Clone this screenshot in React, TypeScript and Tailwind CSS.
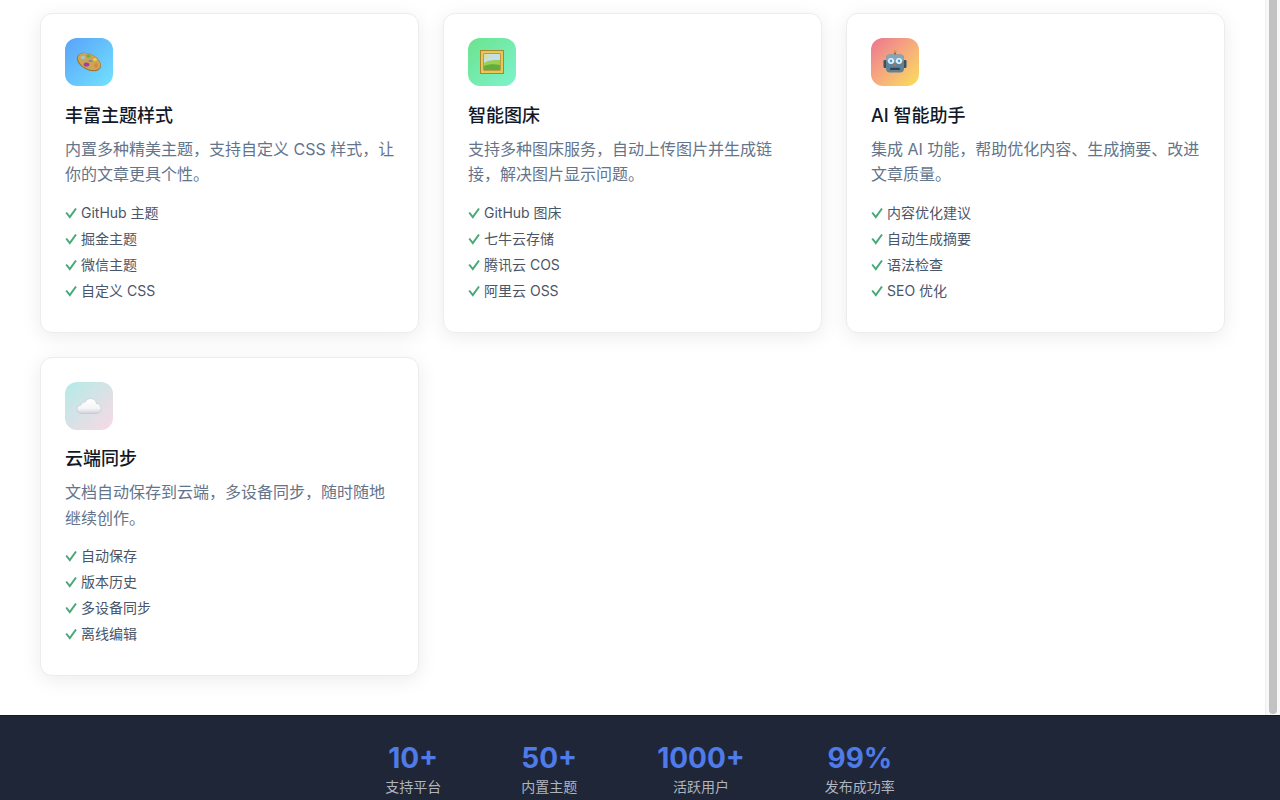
import React from 'react';

const features = [
  {
    title: '丰富主题样式',
    desc: '内置多种精美主题，支持自定义 CSS 样式，让你的文章更具个性。',
    items: ['GitHub 主题', '掘金主题', '微信主题', '自定义 CSS'],
    iconBg: 'bg-gradient-to-br from-[#5aa2f8] to-[#72e2ff]',
    icon: <PaletteIcon />,
  },
  {
    title: '智能图床',
    desc: '支持多种图床服务，自动上传图片并生成链接，解决图片显示问题。',
    items: ['GitHub 图床', '七牛云存储', '腾讯云 COS', '阿里云 OSS'],
    iconBg: 'bg-gradient-to-br from-[#6be38c] to-[#7ff3cd]',
    icon: <PictureIcon />,
  },
  {
    title: 'AI 智能助手',
    desc: '集成 AI 功能，帮助优化内容、生成摘要、改进文章质量。',
    items: ['内容优化建议', '自动生成摘要', '语法检查', 'SEO 优化'],
    iconBg: 'bg-gradient-to-br from-[#ec7390] to-[#fadf55]',
    icon: <RobotIcon />,
  },
  {
    title: '云端同步',
    desc: '文档自动保存到云端，多设备同步，随时随地继续创作。',
    items: ['自动保存', '版本历史', '多设备同步', '离线编辑'],
    iconBg: 'bg-gradient-to-br from-[#b0ebe8] to-[#f8d8e4]',
    icon: <CloudIcon />,
  },
];

const stats = [
  { value: '10+', label: '支持平台' },
  { value: '50+', label: '内置主题' },
  { value: '1000+', label: '活跃用户' },
  { value: '99%', label: '发布成功率' },
];

function PaletteIcon() {
  return (
    <svg width="28" height="24" viewBox="0 0 28 24">
      <ellipse cx="14" cy="12" rx="13" ry="8" transform="rotate(28 14 12)" fill="#9a7232" />
      <ellipse cx="14" cy="11.6" rx="12.2" ry="7.3" transform="rotate(28 14 12)" fill="#cda355" />
      <ellipse cx="8" cy="7.5" rx="2.2" ry="1.8" fill="#a8c4cc" />
      <ellipse cx="13.5" cy="6" rx="2" ry="1.5" fill="#5fb245" />
      <ellipse cx="20" cy="9.5" rx="1.8" ry="1.5" fill="#efd23e" />
      <ellipse cx="11.5" cy="14.5" rx="2.8" ry="2" fill="#9b3fae" />
      <ellipse cx="21" cy="15.5" rx="1.6" ry="2.2" fill="#dd8238" />
      <ellipse cx="15.5" cy="11" rx="2" ry="1.1" fill="#5b8fb5" />
    </svg>
  );
}

function PictureIcon() {
  return (
    <svg width="24" height="24" viewBox="0 0 24 24">
      <rect x="0" y="0" width="24" height="24" fill="#a9852b" />
      <rect x="1" y="1" width="22" height="22" fill="#e6c856" />
      <rect x="3.5" y="3.5" width="17" height="17" fill="#8d7030" />
      <rect x="4" y="4" width="16" height="16" fill="#c4dfe8" />
      <circle cx="6.5" cy="6.5" r="2" fill="#f4dc62" />
      <path d="M4 13c4-3 9-3 16-3v10H4z" fill="#9bd052" />
      <path d="M4 16c5-2 10-2 16-1v5H4z" fill="#62ad3c" />
    </svg>
  );
}

function RobotIcon() {
  return (
    <svg width="26" height="26" viewBox="0 0 26 26">
      <circle cx="13" cy="2.8" r="1.7" fill="#e8974a" />
      <rect x="12.2" y="3.5" width="1.6" height="2.5" fill="#8a5a3a" />
      <rect x="1.5" y="11" width="3.5" height="8" rx="1.2" fill="#3f525e" />
      <rect x="21" y="11" width="3.5" height="8" rx="1.2" fill="#3f525e" />
      <rect x="4" y="5.5" width="18" height="18" rx="4" fill="#5f8296" />
      <rect x="4" y="5.5" width="18" height="8" rx="4" fill="#86a6b8" />
      <circle cx="9" cy="12" r="3" fill="#e8f4fa" />
      <circle cx="17" cy="12" r="3" fill="#e8f4fa" />
      <circle cx="9" cy="12" r="1.4" fill="#4aa3d8" />
      <circle cx="17" cy="12" r="1.4" fill="#4aa3d8" />
      <rect x="12.2" y="14.5" width="1.6" height="2.4" fill="#c86a5a" />
      <rect x="8" y="18.8" width="10" height="2.2" rx="1" fill="#33444f" />
    </svg>
  );
}

function CloudIcon() {
  return (
    <svg width="26" height="18" viewBox="0 0 26 18">
      <defs>
        <linearGradient id="cloudFill" x1="0" y1="0" x2="0" y2="1">
          <stop offset="0" stopColor="#ffffff" />
          <stop offset="0.65" stopColor="#f6f6f8" />
          <stop offset="1" stopColor="#cfd2da" />
        </linearGradient>
      </defs>
      <path
        d="M6 16.5c-3 0-5-1.9-5-4.3 0-2.2 1.7-4 3.9-4.2C5.6 5.9 7.4 4.9 9.3 5.1 10.5 2.6 12.7 1.3 15.1 1.5c2.9.2 5 2.3 5.3 5 2.8.2 4.6 2.5 4.6 5 0 2.8-2.2 5-5.2 5z"
        fill="url(#cloudFill)"
        stroke="#b9bdc8"
        strokeWidth="0.5"
      />
    </svg>
  );
}

function FeatureCard({ title, desc, items, iconBg, icon }: (typeof features)[number]) {
  return (
    <div className="rounded-xl border border-[#eaecf0] bg-white px-6 pt-6 pb-7 shadow-[0_4px_20px_rgba(0,0,0,0.08)]">
      <div className={`flex h-12 w-12 items-center justify-center rounded-xl ${iconBg}`}>{icon}</div>
      <h3 className="mt-[15.5px] text-lg leading-[27px] font-medium text-[#111827]">{title}</h3>
      <p className="mt-[8.2px] -mr-1 text-base leading-[25.6px] text-[#64748b]">{desc}</p>
      <ul className="mt-[11.8px]">
        {items.map((item) => (
          <li key={item} className="flex h-[26px] items-center text-sm text-[#4a5568]">
            <svg width="16" height="14" viewBox="0 0 16 14" className="shrink-0" fill="none">
              <path d="M1.2 6.5 L4.8 11 L11 2.5" stroke="#48a878" strokeWidth="2" />
            </svg>
            {item}
          </li>
        ))}
      </ul>
    </div>
  );
}

export default function App() {
  return (
    <div className="flex h-screen flex-col overflow-hidden bg-white font-['Inter','Noto_Sans_CJK_SC',sans-serif]">
      <div className="flex min-h-0 flex-1">
        <main className="min-w-0 flex-1 px-10 pt-[13px]">
          <div className="grid grid-cols-3 gap-6">
            {features.map((f) => (
              <FeatureCard key={f.title} {...f} />
            ))}
          </div>
        </main>
        <div className="w-[15px] border-l border-[#eeeeee] bg-[#f8f8f8] px-[3px]">
          <div className="h-[714px] rounded-b-full bg-[#c2c2c2]" />
        </div>
      </div>
      <footer className="flex h-[85px] shrink-0 justify-center gap-20 border-t border-[#1a1a1a] bg-[#1f2638] pt-[25px]">
        {stats.map((s) => (
          <div key={s.label} className="flex flex-col items-center">
            <div className="text-[28px] leading-[34px] font-bold text-[#4f7be8]">{s.value}</div>
            <div className="mt-[2px] text-sm leading-5 text-[#b0b4bc]">{s.label}</div>
          </div>
        ))}
      </footer>
    </div>
  );
}
